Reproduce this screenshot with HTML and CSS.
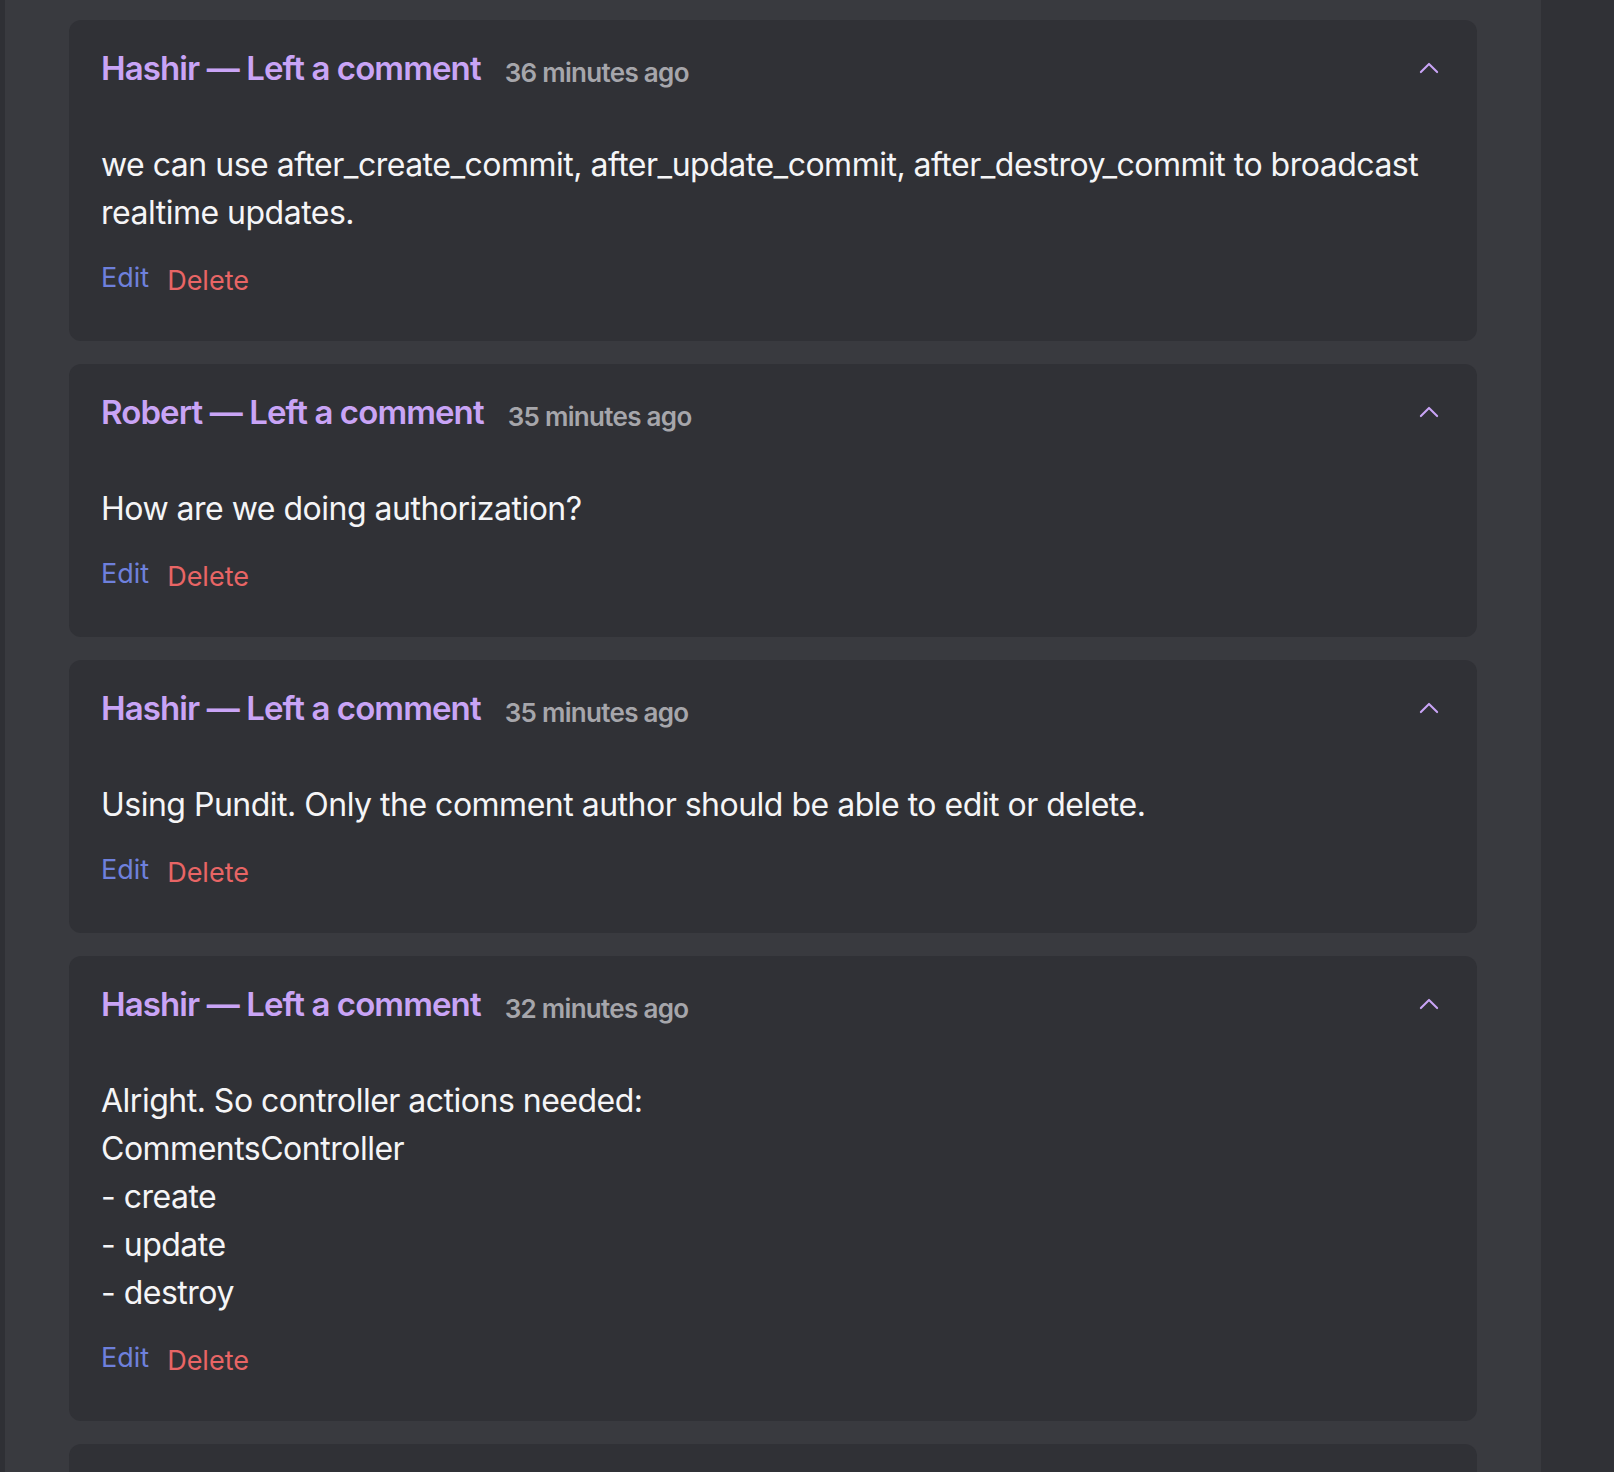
FILE: index.html
```html
<!DOCTYPE html>
<html lang="en">
<head>
<meta charset="utf-8">
<title>Comments</title>
<link rel="stylesheet" href="styles.css">
</head>
<body>
<div class="app">
  <div class="rail"></div>
  <main class="main">
    <div class="comments">
      <article class="card">
        <header class="card-head">
          <div class="meta">
            <h3 class="author">Hashir — Left a comment</h3>
            <span class="time">36 minutes ago</span>
          </div>
          <button class="toggle" aria-label="Collapse">
            <svg viewBox="0 0 24 24" width="26" height="26" fill="none" stroke="currentColor" stroke-width="1.9" stroke-linecap="round" stroke-linejoin="round"><path d="M4.5 15.75l7.5-7.5 7.5 7.5"/></svg>
          </button>
        </header>
        <p class="body">we can use after_create_commit, after_update_commit, after_destroy_commit to broadcast realtime updates.</p>
        <div class="actions"><a class="edit" href="#">Edit</a><button class="delete">Delete</button></div>
      </article>

      <article class="card">
        <header class="card-head">
          <div class="meta">
            <h3 class="author">Robert — Left a comment</h3>
            <span class="time">35 minutes ago</span>
          </div>
          <button class="toggle" aria-label="Collapse">
            <svg viewBox="0 0 24 24" width="26" height="26" fill="none" stroke="currentColor" stroke-width="1.9" stroke-linecap="round" stroke-linejoin="round"><path d="M4.5 15.75l7.5-7.5 7.5 7.5"/></svg>
          </button>
        </header>
        <p class="body">How are we doing authorization?</p>
        <div class="actions"><a class="edit" href="#">Edit</a><button class="delete">Delete</button></div>
      </article>

      <article class="card">
        <header class="card-head">
          <div class="meta">
            <h3 class="author">Hashir — Left a comment</h3>
            <span class="time">35 minutes ago</span>
          </div>
          <button class="toggle" aria-label="Collapse">
            <svg viewBox="0 0 24 24" width="26" height="26" fill="none" stroke="currentColor" stroke-width="1.9" stroke-linecap="round" stroke-linejoin="round"><path d="M4.5 15.75l7.5-7.5 7.5 7.5"/></svg>
          </button>
        </header>
        <p class="body">Using Pundit. Only the comment author should be able to edit or delete.</p>
        <div class="actions"><a class="edit" href="#">Edit</a><button class="delete">Delete</button></div>
      </article>

      <article class="card">
        <header class="card-head">
          <div class="meta">
            <h3 class="author">Hashir — Left a comment</h3>
            <span class="time">32 minutes ago</span>
          </div>
          <button class="toggle" aria-label="Collapse">
            <svg viewBox="0 0 24 24" width="26" height="26" fill="none" stroke="currentColor" stroke-width="1.9" stroke-linecap="round" stroke-linejoin="round"><path d="M4.5 15.75l7.5-7.5 7.5 7.5"/></svg>
          </button>
        </header>
        <p class="body">Alright. So controller actions needed:<br>CommentsController<br>- create<br>- update<br>- destroy</p>
        <div class="actions"><a class="edit" href="#">Edit</a><button class="delete">Delete</button></div>
      </article>

      <article class="card card-next" aria-hidden="true"></article>
    </div>
  </main>
  <aside class="panel"></aside>
</div>
</body>
</html>
```

FILE: styles.css
```css
* { box-sizing: border-box; }

html, body {
  margin: 0;
  padding: 0;
  height: 100%;
}

body {
  background: #393a3f;
  font-family: Inter, "Noto Sans", "Liberation Sans", sans-serif;
  color: #f5f5f7;
  overflow: hidden;
}

.app {
  display: flex;
  height: 100vh;
  overflow: hidden;
}

.rail {
  width: 5px;
  flex: none;
  background: #2f3035;
}

.main {
  flex: 1;
  min-width: 0;
  padding: 20px 64px 0;
  background: #393a3f;
}

.panel {
  width: 73px;
  flex: none;
  background: #303136;
}

.comments {
  display: flex;
  flex-direction: column;
  gap: 23px;
}

.card {
  background: #303136;
  border-radius: 12px;
  padding: 28px 35px 42px 32px;
}

.card-next {
  height: 200px;
}

.card-head {
  display: flex;
  align-items: center;
  justify-content: space-between;
}

.meta {
  display: flex;
  align-items: flex-end;
  gap: 24px;
}

.author {
  margin: 0;
  font-size: 33px;
  line-height: 40px;
  font-weight: 600;
  letter-spacing: -0.9px;
  color: #c9a4f6;
}

.time {
  font-size: 26px;
  line-height: 30px;
  font-weight: 600;
  letter-spacing: -0.7px;
  color: #a6a6ab;
}

.toggle {
  display: flex;
  align-items: center;
  justify-content: center;
  padding: 0;
  border: 0;
  background: none;
  color: #c9a4f6;
  cursor: pointer;
}

.body {
  margin: 53px 0 0;
  font-size: 32px;
  line-height: 48px;
  font-weight: 400;
  letter-spacing: -0.5px;
  color: #f5f5f7;
}

.actions {
  display: flex;
  align-items: flex-start;
  gap: 18px;
  margin-top: 23px;
}

.edit {
  font-size: 27px;
  line-height: 36px;
  color: #6e80dc;
  text-decoration: none;
}

.delete {
  margin-top: 3px;
  padding: 0;
  border: 0;
  background: none;
  font-family: inherit;
  font-size: 27px;
  line-height: 36px;
  color: #e86565;
  cursor: pointer;
}
```
